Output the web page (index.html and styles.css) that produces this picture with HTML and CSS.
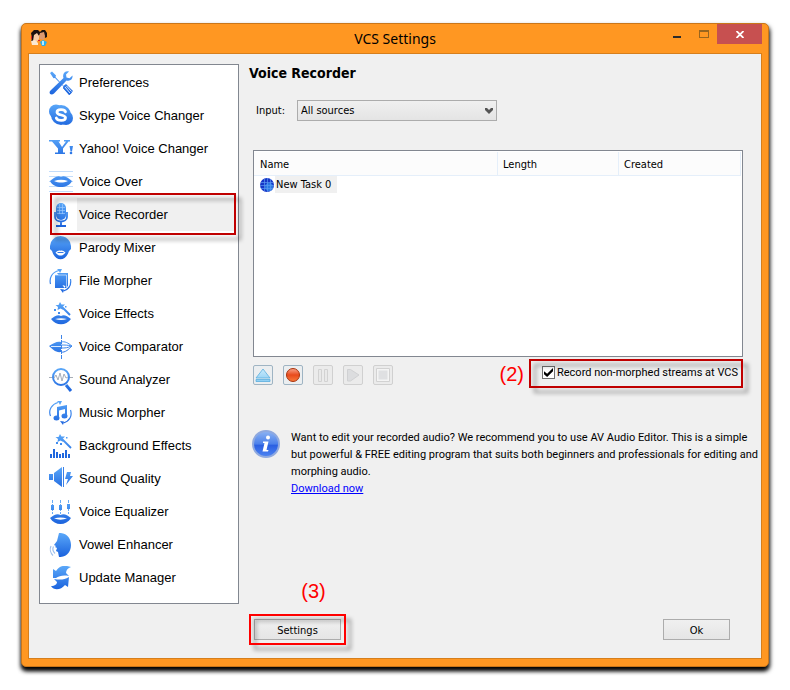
FILE: index.html
```html
<!DOCTYPE html>
<html lang="en">

<head>
    <meta charset="UTF-8">
    <meta name="viewport" content="width=device-width, initial-scale=1.0">
    <title>VCS Settings</title>
    <link rel="stylesheet" href="styles.css">
</head>

<body>
    <!-- Shared gradients for the icons -->
    <svg class="defs" width="0" height="0" aria-hidden="true">
        <defs>
            <linearGradient id="blue" gradientUnits="userSpaceOnUse" x1="0" y1="0" x2="0" y2="24">
                <stop offset="0" stop-color="#5ba8f9" />
                <stop offset="1" stop-color="#1a62dd" />
            </linearGradient>
            <linearGradient id="btn-up" x1="0" y1="0" x2="0" y2="1">
                <stop offset="0" stop-color="#c9ebfc" />
                <stop offset="1" stop-color="#8ccdf3" />
            </linearGradient>
            <linearGradient id="btn-rec" x1="0" y1="0" x2="0" y2="1">
                <stop offset="0" stop-color="#f9a58c" />
                <stop offset="0.5" stop-color="#e84a1c" />
                <stop offset="1" stop-color="#f97c3c" />
            </linearGradient>
            <linearGradient id="info" x1="0" y1="0" x2="0" y2="1">
                <stop offset="0" stop-color="#8db4f3" />
                <stop offset="0.5" stop-color="#4b80ea" />
                <stop offset="0.55" stop-color="#2a5fe2" />
                <stop offset="1" stop-color="#4f86f2" />
            </linearGradient>
        </defs>
    </svg>

    <div class="window">
        <header class="titlebar">
            <svg class="app-icon" viewBox="0 0 18 18">
                <path d="M1 4L4 1h4l2 2 2-2h3l2 3v4l-2 1-1-3H9L7 9l-4 3-2 1 1-4z" fill="#1b1210" />
                <path d="M4 6l3-2 2 3v3l-3 4-3-2z" fill="#f6cda6" />
                <path d="M10 4l4-1 1 4-1 4-4-1-1-3z" fill="#dd9a70" />
                <path d="M1 12l4-1 3 3v2H2z" fill="#fbe8d2" />
                <path d="M10 13l3-2 4 2-2 4h-3z" fill="#27b0f0" />
                <path d="M12 12h2v4h-2z" fill="#b8ecff" />
                <path d="M1 7h1v3H1zM8 11h2v1H8z" fill="#d8242c" />
            </svg>
            <h1>VCS Settings</h1>
            <div class="window-buttons">
                <button type="button" class="win-btn minimize" aria-label="Minimize">
                    <svg width="8" height="2"><rect width="8" height="2" fill="#2b2b2b" /></svg>
                </button>
                <button type="button" class="win-btn maximize" aria-label="Maximize" disabled>
                    <svg width="10" height="8"><path d="M0 0h10v8H0zM1 2v5h8V2z" fill="#99651e" fill-rule="evenodd" /></svg>
                </button>
                <button type="button" class="win-btn close" aria-label="Close">
                    <svg width="8" height="7"><path d="M0.500 0L7.500 7M7.500 0L0.500 7" stroke="#fff" stroke-width="1.800" /></svg>
                </button>
            </div>
        </header>

        <div class="client">
            <nav class="menu">
                <a href="#"><svg class="icon" viewBox="0 0 24 24">
                    <path d="M1 2l2-1.500 4 4-.5 1.500 8 9 1.500-.5L23 21.500 20.500 24 14 17l.5-1.500-8.500-8.500-1.500.3z" fill="url(#blue)" />
                    <path d="M15 14.500l2-1.500 7 7-4 4-6-7z" fill="url(#blue)" />
                    <path d="M16 16l5 6M17.500 15l5 5.500" stroke="#d8e9ff" />
                    <path d="M20 .5l-3 3 .5 3 3 .7L23.500 4.500C24 8 21.500 10.500 17.500 9.500L5 22.500C2 25-1 22 1.500 19.500L14.500 7C13 3 16-.5 20 .5z" fill="url(#blue)" />
                </svg>Preferences</a>
                <a href="#"><svg class="icon" viewBox="0 0 24 24">
                    <circle cx="7" cy="7.500" r="7" fill="url(#blue)" />
                    <circle cx="17" cy="14" r="7" fill="url(#blue)" />
                    <circle cx="12" cy="11" r="10" fill="url(#blue)" />
                    <path d="M16.500 7.800C15.500 4.800 8 4.800 8 8.200c0 3.600 8.500 2 8.500 5.600 0 3.500-8 3.400-9.200.2" fill="none" stroke="#fff" stroke-width="2.800" stroke-linecap="round" />
                </svg>Skype Voice Changer</a>
                <a href="#"><svg class="icon" viewBox="0 0 24 24">
                    <path d="M0 3h11v1.500H9.500L13 10l4-5.500h-2V3h6v1.500h-1.500L14 11.500V15.500h2V17H6v-1.500h3v-4L3 4.500H0z" fill="url(#blue)" />
                    <path d="M20.500 9H24l-1 5.500h-1.500z" fill="url(#blue)" />
                    <circle cx="22" cy="16" r="1.300" fill="url(#blue)" />
                </svg>Yahoo! Voice Changer</a>
                <a href="#"><svg class="icon" viewBox="0 0 24 24">
                    <path d="M0 1.500h24M0 6.500h24M0 11.500h24M0 16.500h24M0 21.500h24" stroke="#c2dcfa" />
                    <path d="M1 11C5 8 8 5 12 7c4-2 7 1 11 4-4 8-18 8-22 0z" fill="url(#blue)" />
                    <path d="M5 11c5-1.700 9-1.700 14 0-5 2-9 2-14 0z" fill="#fff" />
                </svg>Voice Over</a>
                <a href="#" class="selected"><svg class="icon" viewBox="0 0 24 24">
                    <rect x="7" y="0" width="10" height="17" rx="5" fill="url(#blue)" />
                    <path d="M8 4.500h8M8 7.500h8M8 10.500h8M10.500 1v10M13.500 1v10" stroke="#9ccaff" stroke-width=".7" />
                    <path d="M6 9v5c0 6 12 6 12 0V9M12 18v4" fill="none" stroke="url(#blue)" stroke-width="1.800" />
                    <path d="M7 22h10v2H7z" fill="url(#blue)" />
                </svg><span>Voice Recorder</span></a>
                <a href="#"><svg class="icon" viewBox="0 0 24 24">
                    <path d="M2 6C6-2 17-2 21 6l1 4v3l-2 2c-3 11-14 11-17 0l-2-2v-3z" fill="url(#blue)" />
                    <path d="M6.500 16.500c2-1.700 3.500-2.500 5-1.700 1.500-.8 3 0 5 1.700-2.500 4-7.500 4-10 0z" fill="#fff" />
                    <path d="M8.500 16.500h6" stroke="#3279e6" />
                </svg>Parody Mixer</a>
                <a href="#"><svg class="icon" viewBox="0 0 24 24">
                    <path d="M6 6h12v13H6zM8 4h11v14" fill="url(#blue)" />
                    <path d="M6 6h11.500v13" fill="none" stroke="#d8e9ff" stroke-width=".7" />
                    <path d="M13.500 16l3 1-1 2z" fill="#fff" />
                    <path d="M1.500 15C0 9 3 3 10 1.500M21.500 10c1 6-1 10-7 12" fill="none" stroke="url(#blue)" stroke-width="1.200" />
                    <path d="M8 0h5l-2 4-1-2zM11 20l4 .500L14 24z" fill="url(#blue)" />
                </svg>File Morpher</a>
                <a href="#"><svg class="icon" viewBox="0 0 24 24">
                    <path d="M11 0l1.500 2.500L16 2.500 13.500 5l1 3-3-1.500L8.500 8l.5-3-2.500-2h3z" fill="url(#blue)" />
                    <path d="M13 5l8 8" stroke="url(#blue)" stroke-width="2" />
                    <path d="M5 7h2v2H5zM9 10h2v2H9zM16 4h1.500v1.500H16z" fill="url(#blue)" />
                    <path d="M2 17c4-3 7-5 10-3 3-2 6 0 10 3-5 7-15 7-20 0z" fill="url(#blue)" />
                    <path d="M6 17c4-1 8-1 12 0-4 1.300-8 1.300-12 0z" fill="#fff" />
                </svg>Voice Effects</a>
                <a href="#"><svg class="icon" viewBox="0 0 24 24">
                    <path d="M0 11c5-3 8-5 12-4v10C7 18 3 14 0 11z" fill="url(#blue)" />
                    <path d="M2 11.500h10" stroke="#d9eaff" />
                    <path d="M12 7c4-1 7 1 11 4-3 3-7 7-11 6M12 10c4 0 7 0 10 1-3 2-6 2-10 2" fill="none" stroke="url(#blue)" />
                    <path d="M12.500 0v24" stroke="#3c83e8" stroke-dasharray="4 1" />
                </svg>Voice Comparator</a>
                <a href="#"><svg class="icon" viewBox="0 0 24 24">
                    <path d="M0 9.500h4M20 9.500h4" stroke="#a8aeb7" />
                    <circle cx="12" cy="9" r="8" fill="#fff" stroke="url(#blue)" stroke-width="2" />
                    <path d="M5 10l2-3 2 5 2-7 2 8 2-7 2 4 2-1" fill="none" stroke="#a4adba" />
                    <path d="M17 17l5 6" stroke="url(#blue)" stroke-width="3" />
                </svg>Sound Analyzer</a>
                <a href="#"><svg class="icon" viewBox="0 0 24 24">
                    <path d="M8 6l10-2v11.500h-2V8l-6 1.500V18H8z" fill="url(#blue)" />
                    <ellipse cx="7.500" cy="17" rx="3" ry="2.500" fill="url(#blue)" />
                    <ellipse cx="15.500" cy="15" rx="3" ry="2.500" fill="url(#blue)" />
                    <path d="M1.500 15C-1 9 3 3 9 1.500M21.500 9c2 6-1 11-7 13" fill="none" stroke="url(#blue)" stroke-width="1.200" />
                    <path d="M8 0h5l-2 4-1-2zM11 20l4 .500L14 24z" fill="url(#blue)" />
                </svg>Music Morpher</a>
                <a href="#"><svg class="icon" viewBox="0 0 24 24">
                    <path d="M11 0l1.500 2.500L16 2.500 13.500 5l1 3-3-1.500L8.500 8l.5-3-2.500-2h3z" fill="url(#blue)" />
                    <path d="M13 5l9 9" stroke="url(#blue)" stroke-width="1.800" />
                    <path d="M7 8h2v2H7zM11 9h2v2h-2zM17 3h1.500v1.500H17z" fill="url(#blue)" />
                    <path d="M2 24v-4M5 24v-9M8 24v-6M11 24v-4M14 24v-5M17 24v-8M20 24v-4" stroke="#1f67de" stroke-width="2" />
                </svg>Background Effects</a>
                <a href="#"><svg class="icon" viewBox="0 0 24 24">
                    <path d="M0 7h4v6H0zM5 6l8-6v20l-8-6z" fill="url(#blue)" />
                    <path d="M14.500 0v20" stroke="#3a80e8" />
                    <path d="M18 5h4l-1 4h3l-7 9 2-6h-3z" fill="url(#blue)" />
                </svg>Sound Quality</a>
                <a href="#"><svg class="icon" viewBox="0 0 24 24">
                    <path d="M3.500 0v14M11.500 0v14M19.500 0v14" stroke="#69acf6" stroke-dasharray="3 1" />
                    <path d="M2 5h3v5H2zM10 5h3v5h-3zM18 4h3v5h-3z" fill="url(#blue)" />
                    <path d="M1 18c4-3 7-5 10.500-3 3.500-2 6.500 0 10.500 3-5 8-16 8-21 0z" fill="url(#blue)" />
                    <path d="M5 18.500c4-1.500 9-1.500 13 0-4 1.500-9 1.500-13 0z" fill="#fff" />
                </svg>Voice Equalizer</a>
                <a href="#"><svg class="icon" viewBox="0 0 24 24">
                    <path d="M10 0c16-1 16 25 0 24l-1-5-2-1 1-3-2-1 1-1-2-1 3-4z" fill="url(#blue)" />
                    <path d="M4.500 13.500c-1 2-.5 5 1.500 7M2 13c-1.500 3-.5 7 2 9.500" fill="none" stroke="#9fc0ec" stroke-width="1.200" />
                </svg>Vowel Enhancer</a>
                <a href="#"><svg class="icon" viewBox="0 0 24 24">
                    <path d="M4 12V3l3 2c4-6 9-6 15-4-3 1-5 3-5 6l3 3c-6-1-10 0-13 2z" fill="url(#blue)" />
                    <path d="M20 11l-1 10-3-2c-4 5-11 6-14 1 4 0 6-2 6-4l-3-3c6 1 10 1 15-2z" fill="url(#blue)" />
                </svg>Update Manager</a>
            </nav>

            <main class="content">
                <h2>Voice Recorder</h2>

                <div class="input-row">
                    <label for="source">Input:</label>
                    <div class="select-wrap">
                        <select id="source">
                            <option>All sources</option>
                        </select>
                        <svg class="arrow" width="8" height="6"><path d="M0 0h2l2 2 2-2h2v2L4 6 0 2z" fill="#555" /></svg>
                    </div>
                </div>

                <div class="task-list">
                    <table>
                        <thead>
                            <tr>
                                <th>Name</th>
                                <th class="col-length">Length</th>
                                <th class="col-created">Created</th>
                            </tr>
                        </thead>
                        <tbody>
                            <tr>
                                <td>
                                    <div class="task">
                                        <svg width="14" height="14" viewBox="0 0 14 14">
                                            <circle cx="7" cy="7" r="7" fill="#1636c8" />
                                            <circle cx="9" cy="9" r="4" fill="#2b7be4" />
                                            <path d="M1 4.500h12M0 7.500h14M1 10.500h12M4.500 1v12M7.500 0v14M10.500 1v12" stroke="#5a9af0" stroke-width=".7" />
                                        </svg>
                                        <span>New Task 0</span>
                                    </div>
                                </td>
                                <td></td>
                                <td></td>
                            </tr>
                        </tbody>
                    </table>
                </div>

                <div class="toolbar">
                    <button type="button" class="tool" aria-label="Open">
                        <svg width="18" height="18"><path d="M9 3l7 9H2zM2 13.500h14v2H2z" fill="url(#btn-up)" stroke="#5aaede" stroke-width=".8" /></svg>
                    </button>
                    <button type="button" class="tool" aria-label="Record">
                        <svg width="18" height="18"><circle cx="9" cy="9" r="6.500" fill="url(#btn-rec)" stroke="#a8330c" /></svg>
                    </button>
                    <button type="button" class="tool" aria-label="Pause" disabled>
                        <svg width="18" height="18"><path d="M4.500 3.500h3v12h-3zM10.500 3.500h3v12h-3z" fill="#e9e9e9" stroke="#d2d2d2" /></svg>
                    </button>
                    <button type="button" class="tool" aria-label="Play" disabled>
                        <svg width="18" height="18"><path d="M3.500 3.500h3l8.500 5.500-8.500 6h-3z" fill="#dcdddf" stroke="#d0d1d3" /></svg>
                    </button>
                    <button type="button" class="tool" aria-label="Stop" disabled>
                        <svg width="18" height="18"><path d="M3.500 3.500h11v11h-11z" fill="#dfe0e2" stroke="#f4f4f4" stroke-width="2" /><path d="M2.500 2.500h13v13h-13z" fill="none" stroke="#d2d2d2" /></svg>
                    </button>
                    <span class="step">(2)</span>
                    <label class="record-option callout"><input type="checkbox" checked>Record non-morphed streams at VCS</label>
                </div>

                <div class="tip">
                    <svg width="28" height="28" viewBox="0 0 28 28">
                        <circle cx="14" cy="14" r="13" fill="url(#info)" stroke="#8fa9df" stroke-width="2" />
                        <circle cx="16" cy="7.500" r="2" fill="#fff" />
                        <path d="M11 11.500h5.500L14.500 20h2l-.5 1.500h-5.500l2-8.500H11z" fill="#fff" />
                    </svg>
                    <p>
                        Want to edit your recorded audio? We recommend you to use AV Audio Editor. This is a simple<br>
                        but powerful &amp; FREE editing program that suits both beginners and professionals for editing and<br>
                        morphing audio.<br>
                        <a href="#">Download now</a>
                    </p>
                </div>

                <footer class="actions">
                    <div class="settings-step">
                        <span class="step">(3)</span>
                        <div class="callout bright">
                            <button type="button" class="btn btn-settings">Settings</button>
                        </div>
                    </div>
                    <button type="button" class="btn btn-ok">Ok</button>
                </footer>
            </main>
        </div>
    </div>
</body>

</html>
```
FILE: styles.css
```css
* {
    box-sizing: border-box;
}

body {
    margin: 0;
    padding: 23px 21px;
    background-color: #fff;
    color: #000;
    font-family: "DejaVu Sans Condensed", "DejaVu Sans", sans-serif;
    font-size: 11px;
}

button,
select,
input {
    font: inherit;
    color: inherit;
}

.defs {
    position: absolute;
}

.window {
    display: flex;
    flex-direction: column;
    min-height: calc(100vh - 46px);
    padding: 0 6px 7px;
    background-color: #ff9722;
    border: 1px solid #c9761a;
    border-radius: 5px;
    box-shadow: 0 4px 4px #000, 1px 3px 5px rgba(0, 0, 0, 0.5);
}

/* Title bar */

.titlebar {
    display: grid;
    grid-template-columns: 1fr auto 1fr;
    height: 29px;
}

.app-icon {
    width: 18px;
    height: 18px;
    margin: 5px 0 0 2px;
}

.titlebar h1 {
    margin: 0;
    font-family: "Noto Sans", sans-serif;
    font-size: 14px;
    font-weight: normal;
    line-height: 30px;
}

.window-buttons {
    display: flex;
    justify-content: flex-end;
    height: 20px;
}

.win-btn {
    display: flex;
    align-items: center;
    justify-content: center;
    width: 27px;
    height: 20px;
    padding: 0;
    background: none;
    border: none;
}

.minimize {
    padding-top: 6px;
}

.close {
    width: 45px;
    background-color: #c75050;
}

/* Client area */

.client {
    display: grid;
    grid-template-columns: 200px minmax(0, 1fr);
    gap: 10px;
    flex: 1;
    padding: 10px;
    background-color: #f0f0f0;
    border: 1px solid #d67f1d;
}

.menu {
    align-self: start;
    padding: 1px 2px 9px;
    background-color: #fff;
    border: 1px solid #828790;
}

.menu a {
    position: relative;
    display: flex;
    align-items: center;
    gap: 6px;
    height: 33px;
    padding-left: 7px;
    color: #000;
    font-family: "Liberation Sans", Arial, sans-serif;
    font-size: 13px;
    text-decoration: none;
}

.icon {
    width: 24px;
    height: 24px;
}

.menu .selected {
    gap: 4px;
}

.menu .selected span {
    flex: 1;
    padding-left: 2px;
    background-color: #f0f0f0;
    line-height: 33px;
}

/* Red frames drawn over a control */

.callout {
    position: relative;
}

.callout::after,
.menu .selected::after {
    content: "";
    position: absolute;
    inset: 0;
    z-index: 1;
    border: 2px solid #c00000;
    filter: drop-shadow(5px 5px 2px rgba(0, 0, 0, 0.4));
    pointer-events: none;
}

.menu .selected::after {
    inset: -5px 0 -4px 8px;
}

.callout.bright::after {
    border-color: #f00;
}

.step {
    color: #f00;
    font-family: "Liberation Sans", Arial, sans-serif;
    font-size: 20px;
    line-height: 22px;
}

/* Voice recorder page */

.content {
    display: flex;
    flex-direction: column;
}

.content h2 {
    margin: 0;
    font-size: 14px;
    line-height: 18px;
}

.input-row {
    display: flex;
    align-items: center;
    gap: 12px;
    margin: 18px 0 29px 7px;
}

.select-wrap {
    position: relative;
    width: 200px;
}

.select-wrap select {
    display: block;
    width: 100%;
    height: 21px;
    padding: 0 3px;
    background: linear-gradient(#f0f0f0, #e4e4e4);
    border: 1px solid #acacac;
    border-radius: 0;
    appearance: none;
}

.arrow {
    position: absolute;
    top: 8px;
    right: 4px;
    pointer-events: none;
}

.task-list {
    height: 207px;
    margin: 0 8px 0 4px;
    padding: 1px 1px 0 0;
    background-color: #fff;
    border: 1px solid #828790;
}

.task-list table {
    width: 100%;
    border-collapse: separate;
    border-spacing: 0;
    table-layout: fixed;
}

.task-list th {
    height: 24px;
    padding: 2px 5px 0 6px;
    background-color: #fcfcfc;
    border-right: 1px solid #e5effa;
    border-bottom: 1px solid #e5effa;
    font-weight: normal;
    text-align: left;
}

.task-list th + th {
    padding-left: 5px;
}

.col-length {
    width: 121px;
}

.col-created {
    width: 122px;
}

.task-list td {
    padding: 0 6px;
}

.task {
    display: flex;
    align-items: center;
    gap: 1px;
}

.task span {
    padding: 0 6px 0 1px;
    background-color: #f0f0f0;
    line-height: 17px;
}

.toolbar {
    display: flex;
    align-items: center;
    gap: 10px;
    margin: 2px 8px 0 4px;
}

.tool {
    width: 20px;
    height: 20px;
    margin-top: 3px;
    padding: 0;
    background-color: #ebeef0;
    border: 1px solid #9fb4c3;
    border-radius: 2px;
}

.tool svg {
    display: block;
}

.tool:disabled {
    background-color: #ebebeb;
    border-color: #d0d0d0;
}

.toolbar .step {
    margin-left: auto;
}

.record-option {
    display: flex;
    align-items: center;
    gap: 2px;
    width: 214px;
    height: 29px;
    padding: 0 0 2px 13px;
    margin-left: -5px;
    font-family: Roboto, sans-serif;
    white-space: nowrap;
}

.record-option input {
    width: 13px;
    height: 13px;
    margin: 0;
    background-color: #fff;
    border: 1px solid #707070;
    appearance: none;
}

.record-option input:checked::before {
    content: "";
    display: block;
    width: 9px;
    height: 9px;
    margin: 1px;
    background-color: #000;
    clip-path: polygon(0 35%, 35% 65%, 100% 0, 100% 35%, 35% 100%, 0 70%);
}

.tip {
    display: flex;
    gap: 11px;
    margin: 41px 0 0 3px;
}

.tip svg {
    flex: none;
    margin-top: 1px;
}

.tip p {
    margin: 0;
    font-family: Roboto, sans-serif;
    line-height: 17px;
    white-space: nowrap;
}

.tip a {
    color: #00f;
}

.actions {
    display: flex;
    align-items: flex-end;
    justify-content: space-between;
    margin-top: auto;
    padding: 0 21px 3px 0;
}

.settings-step {
    display: flex;
    flex-direction: column;
    align-items: center;
    gap: 12px;
}

.settings-step .step {
    padding-left: 32px;
}

.settings-step .callout {
    padding: 5px;
}

.btn {
    display: block;
    height: 21px;
    padding: 2px 0 0;
    background: linear-gradient(#f0f0f0, #e5e5e5);
    border: 1px solid #acacac;
}

.btn-settings {
    width: 87px;
}

.btn-ok {
    width: 67px;
    margin-bottom: 5px;
}
```
